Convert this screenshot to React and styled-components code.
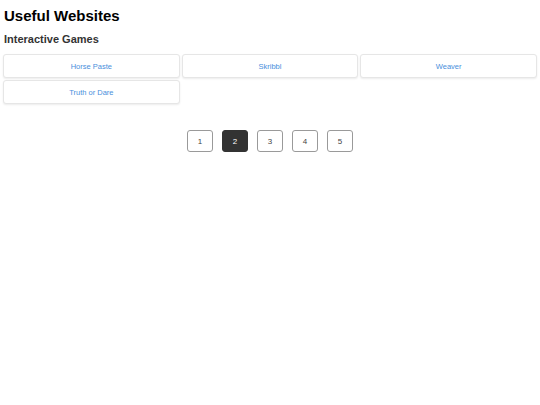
import React, { useState } from "react";
import styled, { createGlobalStyle } from "styled-components";

const GlobalStyle = createGlobalStyle`
  body {
    margin: 0;
    background: #fff;
    font-family: "Liberation Sans", Arial, sans-serif;
  }
`;

const games = ["Horse Paste", "Skribbl", "Weaver", "Truth or Dare"];

const App = () => {
  const [page, setPage] = useState(2);

  return (
    <Wrapper>
      <GlobalStyle />
      <Title>Useful Websites</Title>
      <Subtitle>Interactive Games</Subtitle>
      <CardGrid>
        {games.map((name) => (
          <Card key={name}>
            <CardLink href="#">{name}</CardLink>
          </Card>
        ))}
      </CardGrid>
      <Pagination>
        {[1, 2, 3, 4, 5].map((n) => (
          <PageButton key={n} $active={n === page} onClick={() => setPage(n)}>
            {n}
          </PageButton>
        ))}
      </Pagination>
    </Wrapper>
  );
};

export default App;

const Wrapper = styled.div`
  padding: 8px 3px;
`;

const Title = styled.h1`
  margin: 0 0 0 1px;
  font-size: 15px;
  font-weight: 700;
  color: #000;
  line-height: 16px;
`;

const Subtitle = styled.h2`
  margin: 9px 0 0 1px;
  font-size: 11px;
  font-weight: 700;
  color: #333;
  line-height: 13px;
`;

const CardGrid = styled.div`
  margin-top: 8px;
  display: grid;
  grid-template-columns: repeat(3, 1fr);
  gap: 2px;
`;

const Card = styled.div`
  height: 24px;
  display: flex;
  align-items: center;
  justify-content: center;
  background: #fff;
  border: 1px solid #e6e6e6;
  border-radius: 3px;
  box-shadow: 0 1px 2px rgba(0, 0, 0, 0.08);
  box-sizing: border-box;
`;

const CardLink = styled.a`
  font-size: 7.5px;
  color: #4a8fdc;
  text-decoration: none;
`;

const Pagination = styled.div`
  margin-top: 26px;
  display: flex;
  justify-content: center;
  gap: 9px;
`;

const PageButton = styled.button`
  width: 26px;
  height: 22px;
  padding: 0;
  font-family: "Liberation Sans", Arial, sans-serif;
  font-size: 8px;
  border: 1px solid ${(p) => (p.$active ? "#333" : "#9a9a9a")};
  border-radius: 3px;
  background: ${(p) => (p.$active ? "#333" : "#fff")};
  color: ${(p) => (p.$active ? "#fff" : "#444")};
  cursor: pointer;
`;
